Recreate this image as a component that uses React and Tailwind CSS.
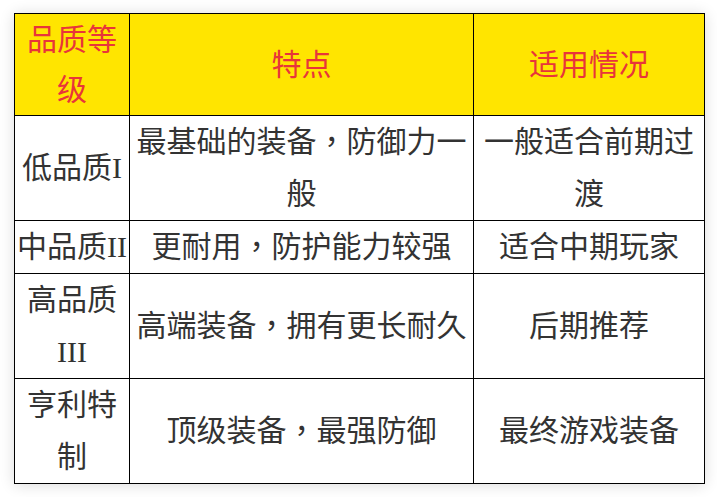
import React from 'react'

const rows = [
    ['低品质I', '最基础的装备，防御力一般', '一般适合前期过渡'],
    ['中品质II', '更耐用，防护能力较强', '适合中期玩家'],
    ['高品质III', '高端装备，拥有更长耐久', '后期推荐'],
    ['亨利特制', '顶级装备，最强防御', '最终游戏装备'],
]

// full-width comma sits in the middle of its box in the original, as in TC fonts
function Text({ value }) {
    const parts = value.split('，')
    return parts.map((part, i) => (
        <React.Fragment key={i}>
            {part}
            {i < parts.length - 1 && <span className="leading-[0]" style={{ fontFamily: '"Noto Sans CJK TC", sans-serif' }}>，</span>}
        </React.Fragment>
    ))
}

function App() {
    return (
        <div className="min-h-[497px] bg-white pt-[13px] pl-[14px]" style={{ fontFamily: '"Liberation Serif", "Noto Sans CJK SC", sans-serif' }}>
            <table className="w-[690px] table-fixed border-collapse shadow-[0_1px_14px_rgba(0,0,0,0.14)] text-[30px] text-[#333333]">
                <colgroup>
                    <col className="w-[115px]" />
                    <col className="w-[344px]" />
                    <col className="w-[231px]" />
                </colgroup>
                <thead>
                    <tr className="bg-[#ffe500] text-[#e8353a]">
                        <th className="border border-black px-[2px] pt-px leading-[50px] font-normal text-center">品质等级</th>
                        <th className="border border-black px-[2px] pt-px leading-[50px] font-normal text-center">特点</th>
                        <th className="border border-black px-[2px] pt-px leading-[50px] font-normal text-center">适用情况</th>
                    </tr>
                </thead>
                <tbody>
                    {rows.map((row, index) => (
                        <tr key={index}>
                            {row.map((cell, i) => (
                                <td key={i} className="border border-black px-[2px] leading-[52px] text-center align-middle">
                                    <Text value={cell} />
                                </td>
                            ))}
                        </tr>
                    ))}
                </tbody>
            </table>
        </div>
    )
}

export default App
